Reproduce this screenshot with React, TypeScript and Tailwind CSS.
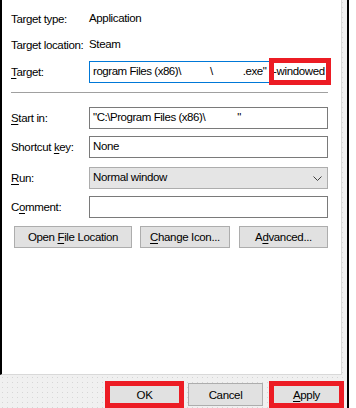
import React from "react";

const dots =
  "bg-[#f0f0f0] bg-[radial-gradient(circle,#d6d6d6_0.7px,transparent_0.9px)] bg-[length:5px_5px]";

function Label({ children }: { children: React.ReactNode }) {
  return <div className="w-[78px] shrink-0 leading-[14px]">{children}</div>;
}

function U({ children }: { children: React.ReactNode }) {
  return <span className="underline underline-offset-[2px] decoration-[1px]">{children}</span>;
}

function Btn({ children, w, className = "" }: { children: React.ReactNode; w: string; className?: string }) {
  return (
    <div
      className={`${w} h-[22px] bg-[#e1e1e1] border border-[#adadad] flex items-center justify-center leading-[14px] ${className}`}
    >
      {children}
    </div>
  );
}

export default function App() {
  return (
    <div className="relative w-[356px] h-[408px] bg-white overflow-hidden flex text-[11.5px] tracking-[-0.35px] text-black font-['Liberation_Sans',Arial,sans-serif]">
      <div className={`w-[347px] h-full flex flex-col ${dots}`}>
        <div className="w-[342px] h-[375px] bg-white border-l-2 border-black border-r border-r-[#d9d9d9] border-b border-b-[#d9d9d9] pl-[9px] flex flex-col">
          <div className="h-[22px] mt-[8px] flex items-center">
            <Label>Target type:</Label>
            <div>Application</div>
          </div>
          <div className="h-[22px] mt-[4px] flex items-center">
            <Label>Target location:</Label>
            <div>Steam</div>
          </div>
          <div className="h-[22px] mt-[5px] flex items-center">
            <Label>
              <U>T</U>arget:
            </Label>
            <div className="w-[239px] h-[22px] border border-[#0078d7] flex items-center overflow-hidden whitespace-pre pl-[3px] tracking-[-0.45px]">
              <span>rogram Files (x86)\</span>
              <span className="ml-[29px]">\</span>
              <span className="ml-[30px]">.exe"</span>
            </div>
          </div>
          <div className="mt-[9px] w-[317px] h-px bg-[#a0a0a0]" />
          <div className="h-[22px] mt-[14px] flex items-center">
            <Label>
              <U>S</U>tart in:
            </Label>
            <div className="w-[239px] h-[22px] border border-[#7a7a7a] flex items-center whitespace-pre pl-[3px] tracking-[-0.45px]">
              <span>"C:\Program Files (x86)\</span>
              <span className="ml-[32px]">"</span>
            </div>
          </div>
          <div className="h-[22px] mt-[7px] flex items-center">
            <Label>
              Shortcut <U>k</U>ey:
            </Label>
            <div className="w-[239px] h-[22px] border border-[#7a7a7a] flex items-center pl-[3px]">None</div>
          </div>
          <div className="h-[22px] mt-[9px] flex items-center">
            <Label>
              <U>R</U>un:
            </Label>
            <div className="w-[239px] h-[22px] border border-[#adadad] bg-[#e5e5e5] flex items-center justify-between pl-[3px] pr-[5px]">
              <span>Normal window</span>
              <svg width="9" height="6" viewBox="0 0 9 6" className="mt-px">
                <path d="M0.5 0.5 L4.5 4.5 L8.5 0.5" fill="none" stroke="#404040" strokeWidth="1" />
              </svg>
            </div>
          </div>
          <div className="h-[22px] mt-[7px] flex items-center">
            <Label>
              C<U>o</U>mment:
            </Label>
            <div className="w-[239px] h-[22px] border border-[#7a7a7a]" />
          </div>
          <div className="mt-[8px] ml-[3px] flex">
            <Btn w="w-[118px]">
              <span>
                Open <U>F</U>ile Location
              </span>
            </Btn>
            <Btn w="w-[90px]" className="ml-[8px]">
              <span>
                <U>C</U>hange Icon...
              </span>
            </Btn>
            <Btn w="w-[89px]" className="ml-[9px]">
              <span>
                A<U>d</U>vanced...
              </span>
            </Btn>
          </div>
        </div>
        <div className="flex justify-end pr-[3px] mt-[8px] gap-[6px]">
          <div className="w-[75px] h-[23px] bg-[#e1e1e1] border border-[#0078d7] flex items-center justify-center leading-[14px]">
            OK
          </div>
          <div className="w-[75px] h-[23px] bg-[#e1e1e1] border border-[#adadad] flex items-center justify-center leading-[14px]">
            Cancel
          </div>
          <div className="w-[75px] h-[23px] bg-[#e1e1e1] border border-[#adadad] flex items-center justify-center leading-[14px]">
            <span>
              <U>A</U>pply
            </span>
          </div>
        </div>
      </div>
      <div className="w-[2px] h-full bg-black" />
      <div className="flex-1 h-full bg-white" />

      {/* red annotation boxes */}
      <div className="absolute left-[269px] top-[58px] w-[62px] h-[27px] border-[5px] border-[#ec1c24] bg-white flex items-center overflow-hidden whitespace-pre">
        <span className="-ml-[1px]">-windowed</span>
        <span className="ml-[1px] w-px h-[13px] bg-black" />
      </div>
      <div className="absolute left-[105px] top-[381px] w-[79px] h-[27px] border-[5px] border-[#ec1c24]" />
      <div className="absolute left-[269px] top-[381px] w-[75px] h-[27px] border-[5px] border-[#ec1c24]" />
    </div>
  );
}
